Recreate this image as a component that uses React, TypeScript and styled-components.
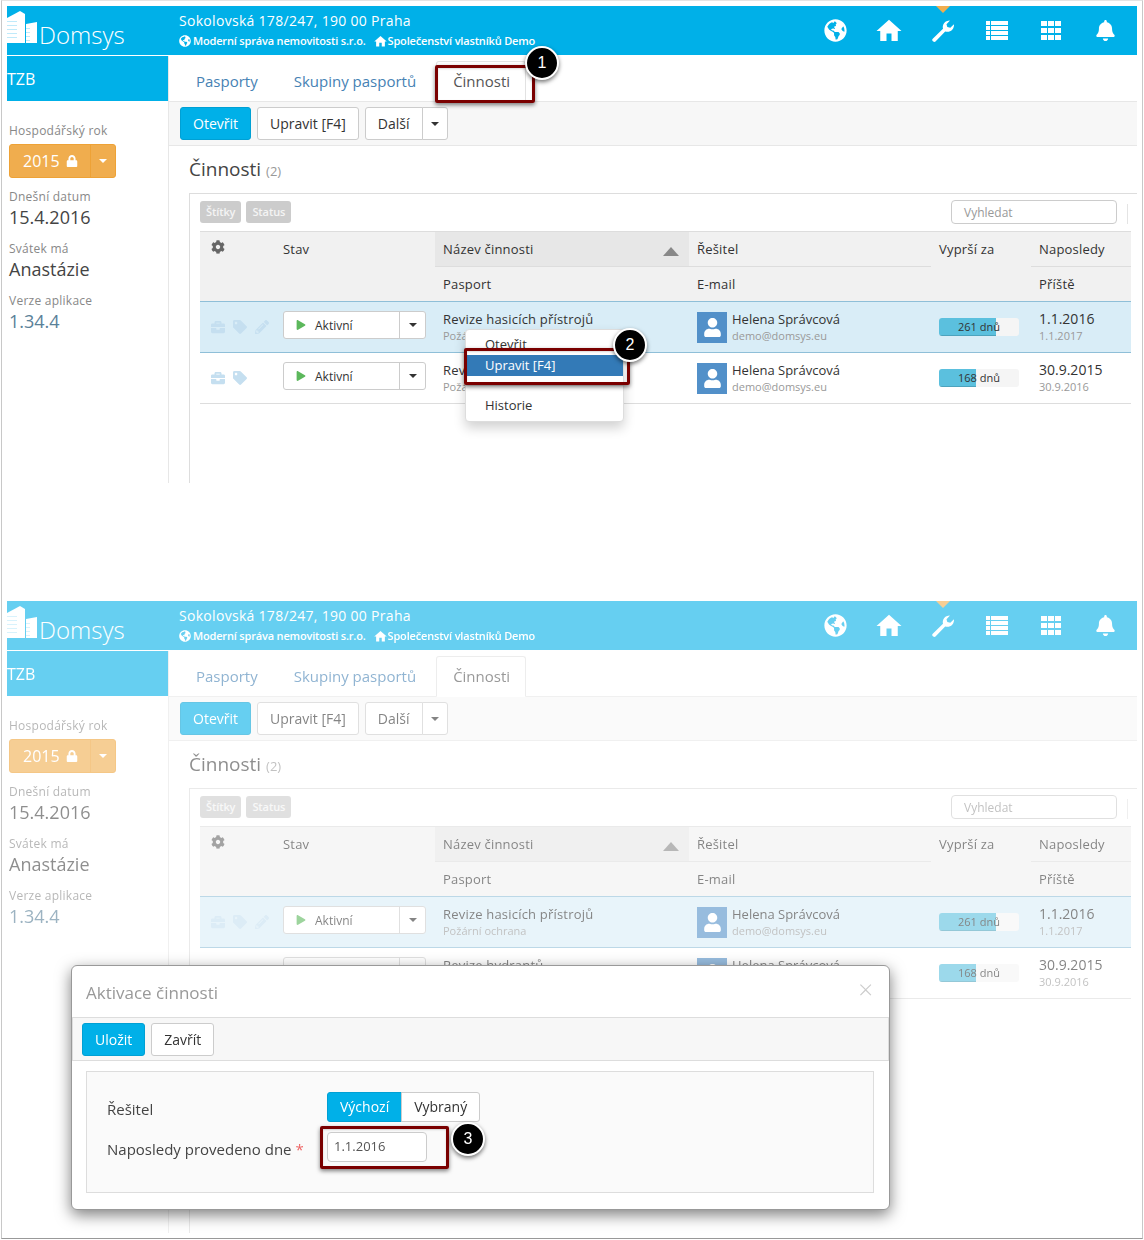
import React from 'react'
import styled, { createGlobalStyle } from 'styled-components'
import {
  FaBell,
  FaBriefcase,
  FaCog,
  FaGlobeAmericas,
  FaLock,
  FaPencilAlt,
  FaPlay,
  FaTag,
  FaUser,
} from 'react-icons/fa'
import { MdHome } from 'react-icons/md'

const brand = '#00b0e8'

const GlobalStyle = createGlobalStyle`
  * { box-sizing: border-box; }
  html, body { margin: 0; padding: 0; background: #fff; }
  body { font-family: "Open Sans", "Liberation Sans", sans-serif; color: #333; }
`

const Frame = styled.div`
  margin-left: 1px;
  width: 1142px;
  height: 1239px;
  padding: 5px 5px 0 5px;
  border: 1px solid #c8c8c8;
  border-top-color: #e4e4e4;
  border-bottom-color: #999;
`

const ScreenBox = styled.div<{ $height: number; $gap: number }>`
  position: relative;
  height: ${p => p.$height}px;
  margin-bottom: ${p => p.$gap}px;
`

const Dim = styled.div<{ $dimmed?: boolean }>`
  height: 100%;
  display: flex;
  flex-direction: column;
  isolation: isolate;
  opacity: ${p => (p.$dimmed ? 0.6 : 1)};
`

const Header = styled.header`
  flex: none;
  height: 49px;
  display: flex;
  align-items: stretch;
  background: ${brand};
  color: #fff;
  margin-bottom: 1px;
`

const LogoBox = styled.div`
  width: 172px;
  display: flex;
  align-items: flex-start;
  padding-top: 5px;
`

const LogoText = styled.span`
  font-size: 24px;
  font-weight: 300;
  line-height: 34px;
  margin: 7px 0 0 1px;
`

const Address = styled.div`
  flex: 1;
  padding-top: 5px;
`

const AddressTitle = styled.div`
  font-size: 14px;
  line-height: 20px;
  letter-spacing: 0.3px;
`

const AddressMeta = styled.div`
  display: flex;
  align-items: center;
  margin-top: 2px;
  font-size: 11px;
  font-weight: 600;
  line-height: 16px;
  letter-spacing: -0.17px;

  svg {
    font-size: 12px;
    margin-right: 2px;
  }
  svg + span + svg {
    font-size: 15px;
    margin-right: 0;
  }
  span {
    margin-right: 7px;
  }
`

const Nav = styled.nav`
  display: flex;
  padding-right: 5px;
`

const NavItem = styled.div<{ $current?: boolean }>`
  position: relative;
  width: 54px;
  display: flex;
  align-items: center;
  justify-content: center;
  font-size: 23px;

  &::before {
    content: '';
    display: ${p => (p.$current ? 'block' : 'none')};
    position: absolute;
    top: 0;
    left: 20px;
    border: 7px solid transparent;
    border-bottom: 0;
    border-top-color: #f0ad4e;
  }
`

const Body = styled.div`
  flex: 1;
  display: flex;
  min-height: 0;
`

const Sidebar = styled.aside`
  flex: none;
  width: 162px;
  border-right: 1px solid #e7e7e7;
`

const SideBand = styled.div`
  height: 45px;
  background: ${brand};
  color: #fff;
  font-size: 16px;
  line-height: 46px;
`

const SideInfo = styled.div`
  padding: 20px 0 0 2px;
`

const SideLabel = styled.div`
  height: 18px;
  font-size: 12px;
  line-height: 20px;
  letter-spacing: 0.25px;
  color: #888;
`

const SideValue = styled.div<{ $tone?: string }>`
  font-size: 18px;
  line-height: 24px;
  margin-bottom: 10px;
  color: ${p => p.$tone || '#444'};
`

const YearButton = styled.div`
  width: 107px;
  height: 34px;
  margin: 5px 0 9px;
  display: flex;
  background: #f0ad4e;
  border: 1px solid #eea236;
  border-radius: 3px;
  color: #fff;
  font-size: 16px;
`

const YearMain = styled.div`
  width: 81px;
  display: flex;
  align-items: center;
  padding-left: 13px;
  border-right: 1px solid #eea236;

  svg {
    font-size: 12px;
    margin-left: 6px;
  }
`

const YearCaret = styled.div`
  flex: 1;
  display: flex;
  align-items: center;
  justify-content: center;
`

const Caret = styled.i<{ $light?: boolean }>`
  display: block;
  border: 4px solid transparent;
  border-bottom: 0;
  border-top-color: ${p => (p.$light ? '#fff' : '#333')};
`

const Main = styled.main`
  flex: 1;
  min-width: 0;
  display: flex;
  flex-direction: column;
`

const TabBar = styled.div`
  flex: none;
  height: 45px;
  display: flex;
  align-items: flex-end;
  gap: 3px;
  padding-left: 10px;
  position: relative;
  z-index: 1;
`

const Tab = styled.div<{ $active?: boolean }>`
  height: 41px;
  margin-bottom: -1px;
  margin-left: ${p => (p.$active ? 1 : 0)}px;
  padding: 0 15px 0 16px;
  font-size: 15px;
  line-height: 38px;
  color: ${p => (p.$active ? '#555' : '#4682b4')};
  background: ${p => (p.$active ? '#fff' : 'transparent')};
  border: 1px solid ${p => (p.$active ? '#e2e2e2' : 'transparent')};
  border-bottom-color: ${p => (p.$active ? '#fff' : 'transparent')};
  border-radius: 3px 3px 0 0;
`

const Toolbar = styled.div<{ $inset?: boolean }>`
  flex: none;
  height: 45px;
  display: flex;
  align-items: center;
  gap: 6px;
  padding-left: ${p => (p.$inset ? 9 : 11)}px;
  background: #f7f7f7;
  border-top: 1px solid #e7e7e7;
  border-bottom: 1px solid #e7e7e7;
`

const Button = styled.div<{ $primary?: boolean }>`
  height: 33px;
  padding: 0 12px;
  display: flex;
  align-items: center;
  font-size: 14px;
  color: ${p => (p.$primary ? '#fff' : '#333')};
  background: ${p => (p.$primary ? brand : '#fff')};
  border: 1px solid ${p => (p.$primary ? '#00a0d4' : '#ccc')};
  border-radius: 3px;
`

const SplitGroup = styled.div`
  display: flex;
`

const SplitMain = styled(Button)`
  border-radius: 3px 0 0 3px;
`

const SplitCaret = styled(Button)`
  width: 26px;
  padding: 0;
  margin-left: -1px;
  justify-content: center;
  border-radius: 0 3px 3px 0;
`

const Title = styled.h1`
  flex: none;
  height: 47px;
  margin: 0;
  padding-left: 20px;
  font-size: 19px;
  font-weight: 400;
  line-height: 46px;
  color: #444;

  small {
    font-size: 13px;
    color: #999;
  }
`

const Panel = styled.section`
  flex: 1;
  margin-left: 20px;
  padding: 0 6px 0 10px;
  border-left: 1px solid #ddd;
  border-top: 1px solid #ddd;
`

const FilterBar = styled.div`
  height: 37px;
  display: flex;
  align-items: flex-start;
  gap: 5px;
  padding-top: 6px;
  position: relative;
`

const Chip = styled.span`
  height: 22px;
  margin-top: 1px;
  padding: 0 6px;
  background: #ccc;
  border-radius: 3px;
  color: #f4f4f4;
  font-size: 11px;
  font-weight: 600;
  line-height: 21px;
  letter-spacing: -0.1px;
`

const Search = styled.div`
  margin-left: auto;
  margin-right: 14px;
  width: 166px;
  height: 24px;
  padding-left: 12px;
  border: 1px solid #ccc;
  border-radius: 4px;
  font-size: 12px;
  line-height: 23px;
  color: #999;
  position: relative;

  &::after {
    content: '';
    position: absolute;
    top: 3px;
    right: -12px;
    height: 20px;
    border-left: 1px solid #e4e4e4;
  }
`

const columns = '75px 160px 254px 242px 100px 100px'

const TableHead = styled.div`
  display: grid;
  grid-template-columns: ${columns};
  grid-template-rows: 35px 35px;
  background: #f1f1f1;
  border-top: 1px solid #ddd;
  border-bottom: 1px solid #8fbfd8;
  height: 71px;
`

const HeadCell = styled.div<{ $tall?: boolean; $sorted?: boolean; $line?: boolean }>`
  grid-row: ${p => (p.$tall ? 'span 2' : 'auto')};
  padding: ${p => (p.$tall ? '8px' : '0')} 8px 0;
  font-size: 13px;
  line-height: ${p => (p.$tall ? '19px' : '34px')};
  letter-spacing: 0.2px;
  color: #333;
  position: relative;
  background: ${p => (p.$sorted ? '#e7e7e7' : 'transparent')};
  border-bottom: ${p => (p.$line ? '1px solid #ddd' : '0')};

  svg {
    color: #666;
    font-size: 14px;
    margin: 0 0 0 3px;
  }
`

const SortMark = styled.i`
  position: absolute;
  right: 10px;
  top: 15px;
  border: 8px solid transparent;
  border-top: 0;
  border-bottom: 9px solid #888;
`

const Row = styled.div<{ $selected?: boolean }>`
  display: grid;
  grid-template-columns: ${columns};
  height: 51px;
  background: ${p => (p.$selected ? '#d9edf7' : '#fff')};
  border-bottom: 1px solid ${p => (p.$selected ? '#8fbfd8' : '#ddd')};
`

const ToolCell = styled.div`
  display: flex;
  align-items: center;
  gap: 8px;
  padding: 0 0 0 11px;
  color: #c5dff0;
  font-size: 14px;
  height: 50px;
`

const StatusCell = styled.div`
  padding: 9px 9px 0 8px;
`

const StatusControl = styled.div`
  display: flex;
  height: 28px;
  background: #fff;
  border: 1px solid #ccc;
  border-radius: 3px;
  font-size: 12px;
  color: #333;
`

const StatusMain = styled.div`
  flex: 1;
  display: flex;
  align-items: center;
  gap: 9px;
  padding-left: 12px;
  border-right: 1px solid #ccc;

  svg {
    color: #5cb85c;
    font-size: 10px;
  }
`

const StatusCaret = styled.div`
  width: 25px;
  display: flex;
  align-items: center;
  justify-content: center;
`

const TextCell = styled.div`
  padding: 8px 8px 0;
  min-width: 0;
`

const Primary = styled.div<{ $large?: boolean; $spaced?: boolean }>`
  font-size: ${p => (p.$large ? 14 : 13)}px;
  line-height: 18px;
  letter-spacing: ${p => (p.$spaced ? 0.2 : 0)}px;
  white-space: nowrap;
`

const Secondary = styled.div`
  font-size: 11px;
  line-height: 16px;
  color: #999;
  white-space: nowrap;
`

const PersonCell = styled.div`
  display: flex;
  gap: 5px;
  padding: 10px 8px 0;
`

const Avatar = styled.div`
  flex: none;
  width: 30px;
  height: 31px;
  display: flex;
  align-items: center;
  justify-content: center;
  background: #5290c9;
  color: #fff;
  font-size: 19px;
`

const PersonText = styled.div`
  margin-top: -2px;
`

const ExpiryCell = styled.div`
  padding: 16px 12px 0 8px;
`

const Progress = styled.div`
  position: relative;
  height: 18px;
  background: #f5f5f5;
  border-radius: 3px;
  overflow: hidden;
`

const ProgressFill = styled.div`
  height: 100%;
  background: #5bc0de;
  box-shadow: inset 0 -1px 0 rgba(0, 0, 0, 0.15);
`

const ProgressText = styled.span`
  position: absolute;
  inset: 0;
  text-align: center;
  font-size: 11px;
  line-height: 18px;
  color: #333;
`

const Menu = styled.div`
  position: absolute;
  left: 458px;
  top: 323px;
  width: 159px;
  height: 93px;
  padding: 4px 0;
  background: #fff;
  border: 1px solid #ddd;
  border-radius: 4px;
  box-shadow: 0 6px 12px rgba(0, 0, 0, 0.18);
  font-size: 13px;
`

const MenuItem = styled.div<{ $active?: boolean }>`
  height: 21px;
  padding-left: 19px;
  line-height: 21px;
  color: ${p => (p.$active ? '#fff' : '#333')};
  background: ${p => (p.$active ? '#337ab7' : 'transparent')};
`

const MenuDivider = styled.div`
  height: 1px;
  margin: 9px 0;
  background: #e5e5e5;
`

const Marker = styled.div<{ $x: number; $y: number; $w: number; $h: number }>`
  position: absolute;
  left: ${p => p.$x}px;
  top: ${p => p.$y}px;
  width: ${p => p.$w}px;
  height: ${p => p.$h}px;
  border: 3px solid #7a0000;
  border-radius: 2px;
  box-shadow: 0 2px 4px rgba(0, 0, 0, 0.5), inset 0 1px 2px rgba(0, 0, 0, 0.15);
`

const Badge = styled.div<{ $x: number; $y: number }>`
  position: absolute;
  left: ${p => p.$x}px;
  top: ${p => p.$y}px;
  width: 34px;
  height: 34px;
  background: #000;
  border: 2px solid #fff;
  border-radius: 50%;
  box-shadow: 0 2px 4px rgba(0, 0, 0, 0.55);
  color: #fff;
  font-family: "Liberation Sans", sans-serif;
  font-size: 16px;
  line-height: 30px;
  text-align: center;
`

const Modal = styled.div`
  position: absolute;
  left: 64px;
  top: 364px;
  width: 819px;
  height: 245px;
  background: #fff;
  border: 1px solid #999;
  border-radius: 6px;
  box-shadow: 0 5px 15px rgba(0, 0, 0, 0.5);
`

const ModalHead = styled.div`
  height: 51px;
  display: flex;
  justify-content: space-between;
  padding: 0 16px 0 14px;
  font-size: 17px;
  line-height: 54px;
  color: #999;
`

const ModalClose = styled.span`
  font-size: 26px;
  font-weight: 300;
  line-height: 46px;
  color: #ccc;
`

const ModalToolbar = styled(Toolbar)`
  height: 44px;
  border: 1px solid #ddd;
`

const FormPanel = styled.div`
  margin: 10px 15px 0 14px;
  height: 122px;
  padding: 20px 0 0 20px;
  background: #fafafa;
  border: 1px solid #ddd;
  display: grid;
  grid-template-columns: 220px 1fr;
  grid-template-rows: 30px 30px;
  row-gap: 10px;
`

const FormLabel = styled.div`
  font-size: 15px;
  line-height: 34px;
  color: #444;

  em {
    color: #e66;
    font-style: normal;
  }
`

const Toggle = styled.div`
  display: flex;
`

const ToggleOption = styled.div<{ $on?: boolean }>`
  padding: 0 12px;
  margin-left: ${p => (p.$on ? 0 : -1)}px;
  font-size: 14px;
  line-height: 28px;
  color: ${p => (p.$on ? '#fff' : '#333')};
  background: ${p => (p.$on ? brand : '#fff')};
  border: 1px solid ${p => (p.$on ? '#00a0d4' : '#ccc')};
  border-radius: ${p => (p.$on ? '3px 0 0 3px' : '0 3px 3px 0')};
`

const DateField = styled.div`
  width: 100px;
  height: 30px;
  padding-left: 6px;
  background: #fff;
  border: 1px solid #ccc;
  border-radius: 4px;
  font-size: 13px;
  line-height: 27px;
  color: #555;
`

const Building = () => (
  <svg width="31" height="33" viewBox="0 0 31 33" fill="#fff">
    <path d="M0 7 L13 0 L18 3 L18 32 L0 32 Z" />
    <path d="M19 13 L30 11 L30 32 L19 32 Z" />
    <g fill="#bfeafa">
      <rect x="0" y="10" width="10" height="1" />
      <rect x="0" y="14" width="10" height="1" />
      <rect x="0" y="18" width="10" height="1" />
      <rect x="0" y="22" width="10" height="1" />
      <rect x="0" y="26" width="10" height="1" />
      <rect x="19" y="17" width="4" height="1" />
      <rect x="19" y="21" width="4" height="1" />
      <rect x="19" y="25" width="4" height="1" />
      <rect x="19" y="29" width="4" height="1" />
    </g>
  </svg>
)

const WrenchIcon = () => (
  <svg width="24" height="24" viewBox="0 0 24 24" fill="#fff">
    <path d="M1.5 20 L12 9.8 C11 6 13.5 1.5 19 1.5 L15.5 5.2 L16.3 8 L19.3 8.8 L23 5.2 C23.4 10.6 18.6 14 14.2 12.4 L4.5 22.6 C3 23.8 0.4 21.6 1.5 20 Z" />
  </svg>
)

const ListIcon = () => (
  <svg width="22" height="20" viewBox="0 0 22 20" fill="#fff">
    {[0, 5, 10, 15].map(y => (
      <g key={y}>
        <rect x="0" y={y} width="4" height="4" />
        <rect x="5" y={y} width="17" height="4" />
      </g>
    ))}
  </svg>
)

const GridIcon = () => (
  <svg width="21" height="19" viewBox="0 0 21 19" fill="#fff">
    {[0, 7, 14].map(y =>
      [0, 7, 14].map(x => <rect key={`${x}-${y}`} x={x} y={y} width="6" height="5" />),
    )}
  </svg>
)

const rows = [
  {
    name: 'Revize hasicích přístrojů',
    days: '261 dnů',
    fill: 71,
    last: '1.1.2016',
    next: '1.1.2017',
    selected: true,
  },
  {
    name: 'Revize hydrantů',
    days: '168 dnů',
    fill: 46,
    last: '30.9.2015',
    next: '30.9.2016',
    selected: false,
  },
]

const Screen = ({
  height,
  gap,
  dimmed,
  children,
}: {
  height: number
  gap: number
  dimmed?: boolean
  children?: React.ReactNode
}) => (
  <ScreenBox $height={height} $gap={gap}>
    <Dim $dimmed={dimmed}>
      <Header>
        <LogoBox>
          <Building />
          <LogoText>Domsys</LogoText>
        </LogoBox>
        <Address>
          <AddressTitle>Sokolovská 178/247, 190 00 Praha</AddressTitle>
          <AddressMeta>
            <FaGlobeAmericas />
            <span>Moderní správa nemovitosti s.r.o.</span>
            <MdHome />
            <span>Společenství vlastníků Demo</span>
          </AddressMeta>
        </Address>
        <Nav>
          <NavItem><FaGlobeAmericas /></NavItem>
          <NavItem><MdHome size={30} /></NavItem>
          <NavItem $current><WrenchIcon /></NavItem>
          <NavItem><ListIcon /></NavItem>
          <NavItem><GridIcon /></NavItem>
          <NavItem><FaBell size={21} /></NavItem>
        </Nav>
      </Header>
      <Body>
        <Sidebar>
          <SideBand>TZB</SideBand>
          <SideInfo>
            <SideLabel>Hospodářský rok</SideLabel>
            <YearButton>
              <YearMain>2015<FaLock /></YearMain>
              <YearCaret><Caret $light /></YearCaret>
            </YearButton>
            <SideLabel>Dnešní datum</SideLabel>
            <SideValue>15.4.2016</SideValue>
            <SideLabel>Svátek má</SideLabel>
            <SideValue>Anastázie</SideValue>
            <SideLabel>Verze aplikace</SideLabel>
            <SideValue $tone="#5a8199">1.34.4</SideValue>
          </SideInfo>
        </Sidebar>
        <Main>
          <TabBar>
            <Tab>Pasporty</Tab>
            <Tab>Skupiny pasportů</Tab>
            <Tab $active>Činnosti</Tab>
          </TabBar>
          <Toolbar>
            <Button $primary>Otevřit</Button>
            <Button>Upravit [F4]</Button>
            <SplitGroup>
              <SplitMain>Další</SplitMain>
              <SplitCaret><Caret /></SplitCaret>
            </SplitGroup>
          </Toolbar>
          <Title>Činnosti <small>(2)</small></Title>
          <Panel>
            <FilterBar>
              <Chip>Štítky</Chip>
              <Chip>Status</Chip>
              <Search>Vyhledat</Search>
            </FilterBar>
            <TableHead>
              <HeadCell $tall><FaCog /></HeadCell>
              <HeadCell $tall>Stav</HeadCell>
              <HeadCell $sorted $line>Název činnosti<SortMark /></HeadCell>
              <HeadCell $line>Řešitel</HeadCell>
              <HeadCell $tall>Vyprší za</HeadCell>
              <HeadCell $line>Naposledy</HeadCell>
              <HeadCell>Pasport</HeadCell>
              <HeadCell>E-mail</HeadCell>
              <HeadCell>Příště</HeadCell>
            </TableHead>
            {rows.map(row => (
              <Row key={row.name} $selected={row.selected}>
                <ToolCell>
                  <FaBriefcase />
                  <FaTag />
                  {row.selected && <FaPencilAlt />}
                </ToolCell>
                <StatusCell>
                  <StatusControl>
                    <StatusMain><FaPlay />Aktivní</StatusMain>
                    <StatusCaret><Caret /></StatusCaret>
                  </StatusControl>
                </StatusCell>
                <TextCell>
                  <Primary $spaced>{row.name}</Primary>
                  <Secondary>Požární ochrana</Secondary>
                </TextCell>
                <PersonCell>
                  <Avatar><FaUser /></Avatar>
                  <PersonText>
                    <Primary>Helena Správcová</Primary>
                    <Secondary>demo@domsys.eu</Secondary>
                  </PersonText>
                </PersonCell>
                <ExpiryCell>
                  <Progress>
                    <ProgressFill style={{ width: `${row.fill}%` }} />
                    <ProgressText>{row.days}</ProgressText>
                  </Progress>
                </ExpiryCell>
                <TextCell>
                  <Primary $large>{row.last}</Primary>
                  <Secondary>{row.next}</Secondary>
                </TextCell>
              </Row>
            ))}
          </Panel>
        </Main>
      </Body>
    </Dim>
    {children}
  </ScreenBox>
)

const App = () => (
  <>
    <GlobalStyle />
    <Frame>
      <Screen height={477} gap={118}>
        <Menu>
          <MenuItem>Otevřit</MenuItem>
          <MenuItem $active>Upravit [F4]</MenuItem>
          <MenuDivider />
          <MenuItem>Historie</MenuItem>
        </Menu>
        <Marker $x={428} $y={59} $w={100} $h={38} />
        <Badge $x={518} $y={40}>1</Badge>
        <Marker $x={457} $y={342} $w={166} $h={37} />
        <Badge $x={606} $y={322}>2</Badge>
      </Screen>
      <Screen height={632} gap={0} dimmed>
        <Modal>
          <ModalHead>
            Aktivace činnosti
            <ModalClose>×</ModalClose>
          </ModalHead>
          <ModalToolbar $inset>
            <Button $primary>Uložit</Button>
            <Button>Zavřít</Button>
          </ModalToolbar>
          <FormPanel>
            <FormLabel>Řešitel</FormLabel>
            <Toggle>
              <ToggleOption $on>Výchozí</ToggleOption>
              <ToggleOption>Vybraný</ToggleOption>
            </Toggle>
            <FormLabel>Naposledy provedeno dne <em>*</em></FormLabel>
            <DateField>1.1.2016</DateField>
          </FormPanel>
        </Modal>
        <Marker $x={313} $y={525} $w={129} $h={43} />
        <Badge $x={444} $y={521}>3</Badge>
      </Screen>
    </Frame>
  </>
)

export default App
